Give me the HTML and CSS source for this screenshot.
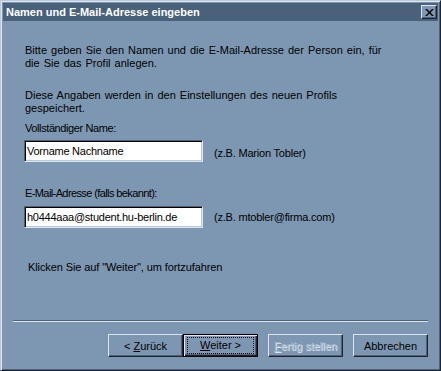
FILE: index.html
```html
<!DOCTYPE html>
<html lang="de">

<head>
    <meta charset="UTF-8">
    <meta name="viewport" content="width=device-width, initial-scale=1.0">
    <link rel="stylesheet" href="styles.css">
    <title>Namen und E-Mail-Adresse eingeben</title>
</head>

<body>

    <div class="window">
        <div class="titlebar">
            <span class="title">Namen und E-Mail-Adresse eingeben</span>
            <span class="close">
                <svg width="9" height="7" viewBox="0 0 9 7">
                    <path d="M0 0h2l2.5 2.5L7 0h2L5.5 3.5 9 7H7L4.5 4.5 2 7H0l3.5-3.5z" fill="#000" />
                </svg>
            </span>
        </div>

        <div class="content">
            <p class="intro">Bitte geben Sie den Namen und die E-Mail-Adresse der Person ein, für<br>die Sie das Profil anlegen.</p>
            <p class="info">Diese Angaben werden in den Einstellungen des neuen Profils<br>gespeichert.</p>

            <label class="field-label" for="fullName">Vollständiger Name:</label>
            <div class="field-row first">
                <input class="field" type="text" id="fullName" value="Vorname Nachname">
                <span class="hint">(z.B. Marion Tobler)</span>
            </div>

            <label class="field-label mail" for="email">E-Mail-Adresse (falls bekannt):</label>
            <div class="field-row">
                <input class="field" type="text" id="email" value="h0444aaa@student.hu-berlin.de">
                <span class="hint">(z.B. mtobler@firma.com)</span>
            </div>

            <p class="next">Klicken Sie auf "Weiter", um fortzufahren</p>
        </div>

        <div class="separator"></div>

        <div class="buttons">
            <div class="pair">
                <button class="btn">&lt; <u>Z</u>urück</button>
                <button class="btn default"><span class="focus"><u>W</u>eiter &gt;</span></button>
            </div>
            <button class="btn disabled"><u>F</u>ertig stellen</button>
            <button class="btn">Abbrechen</button>
        </div>
    </div>

</body>

</html>
```

FILE: styles.css
```css
body {
    margin: 0;
    background-color: #7d97b2;
    font-family: 'Liberation Sans', Arial, sans-serif;
    font-size: 11px;
    color: #000;
}

.window {
    width: 441px;
    height: 371px;
    box-sizing: border-box;
    border: 1px solid;
    border-color: #b9c9da #1c2530 #1c2530 #b9c9da;
    box-shadow: inset 1px 1px #dde6ef, inset -1px -1px #4f6176;
    padding: 2px;
    background-color: #7d97b2;
    display: flex;
    flex-direction: column;
}

.titlebar {
    height: 18px;
    background-color: #4a617c;
    display: flex;
    align-items: center;
    justify-content: space-between;
    padding: 0 1px 0 3px;
    color: #fff;
    font-weight: bold;
    font-size: 11px;
}

.close {
    width: 16px;
    height: 14px;
    box-sizing: border-box;
    background-color: #7d97b2;
    border: 1px solid;
    border-color: #dde6ef #1c2530 #1c2530 #dde6ef;
    box-shadow: inset -1px -1px #4f6176;
    display: flex;
    align-items: center;
    justify-content: center;
}

.content {
    padding-left: 22px;
    line-height: 13px;
    flex: 1;
}

.content p {
    margin: 0;
}

.intro {
    padding-top: 23px;
    word-spacing: 1px;
}

.info {
    margin-top: 19px !important;
    word-spacing: 1px;
}

.field-label {
    display: block;
    margin-top: 7px;
    letter-spacing: -0.4px;
}

.field-label.mail {
    margin-top: 25px;
    letter-spacing: -0.6px;
}

.field-row {
    display: flex;
    align-items: center;
    gap: 11px;
    margin-top: 6px;
    margin-left: -1px;
}

.field-row.first {
    margin-top: 5px;
}

.field-row.first .hint {
    padding-top: 4px;
}

.hint {
    letter-spacing: -0.2px;
}

.field {
    width: 179px;
    height: 22px;
    box-sizing: border-box;
    padding: 0 0 0 2px;
    border: 1px solid;
    border-color: #4f6176 #dde6ef #dde6ef #4f6176;
    box-shadow: inset 1px 1px #000, inset -1px -1px #b9c9da;
    background-color: #fff;
    font-family: 'Liberation Sans', Arial, sans-serif;
    font-size: 11px;
    letter-spacing: -0.25px;
    color: #000;
    outline: none;
}

.next {
    margin-top: 33px !important;
    padding-left: 3px;
    letter-spacing: -0.1px;
}

.separator {
    margin: 0 10px 12px 10px;
    border-top: 1px solid #4f6176;
    border-bottom: 1px solid #dde6ef;
    height: 0;
}

.buttons {
    display: flex;
    justify-content: flex-end;
    gap: 10px;
    padding: 0 10px 11px 0;
}

.pair {
    display: flex;
}

.btn {
    width: 75px;
    height: 23px;
    box-sizing: border-box;
    background-color: #7d97b2;
    border: 1px solid;
    border-color: #dde6ef #1c2530 #1c2530 #dde6ef;
    box-shadow: inset -1px -1px #4f6176;
    font-family: 'Liberation Sans', Arial, sans-serif;
    font-size: 11px;
    color: #000;
    padding: 0;
}

.btn.default {
    border: 1px solid #000;
    box-shadow: inset 1px 1px #dde6ef, inset -1px -1px #1c2530, inset -2px -2px #4f6176;
}

.focus {
    display: inline-block;
    box-sizing: border-box;
    width: 67px;
    height: 17px;
    line-height: 15px;
    border: 1px dotted #000;
}

.btn.disabled {
    color: #a7b9cc;
    text-shadow: 1px 1px #dde6ef;
}
```
